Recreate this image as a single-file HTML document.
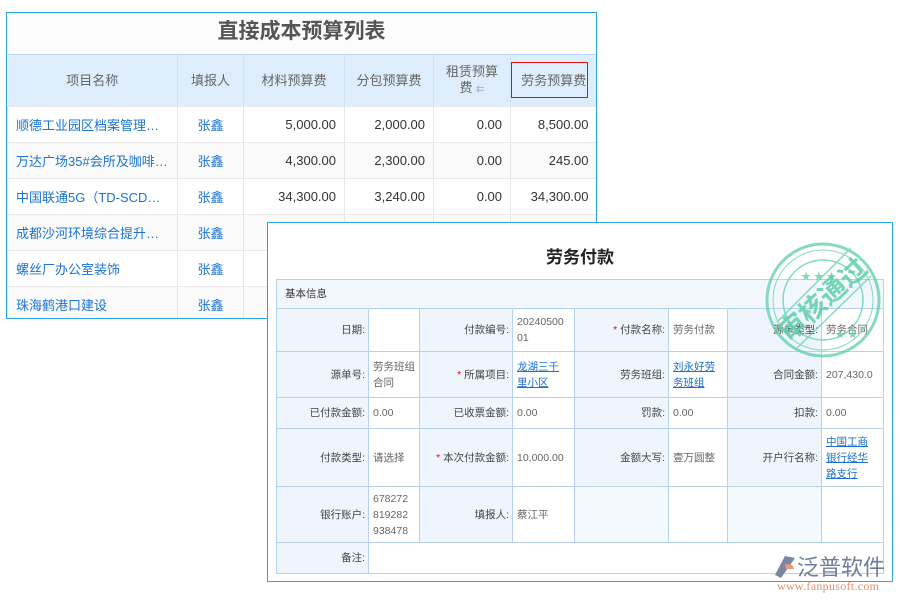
<!DOCTYPE html>
<html><head><meta charset="utf-8">
<style>
*{margin:0;padding:0;box-sizing:border-box}
body{width:900px;height:600px;background:#fff;position:relative;overflow:hidden;font-family:"Liberation Sans","Noto Sans CJK SC",sans-serif}
.a{position:absolute}
#t1{left:6px;top:12px;width:591px;height:307px;border:1px solid #2aa6e2;background:#fff;overflow:hidden}
#t1 .title{position:absolute;left:0;top:0;width:589px;height:42px;text-align:center;font-size:21px;font-weight:bold;color:#555;line-height:38px;background:#fcfcfc}
table{border-collapse:collapse;table-layout:fixed}
#t1 table{position:absolute;left:0;top:41px;width:589px}
#t1 th{background:#deedfb;font-weight:normal;color:#666;font-size:13px;height:52px;border-left:1px solid #cfe2f3;border-top:1px solid #b8d8f2;line-height:16px}
#t1 td{height:36px;font-size:13px;color:#333;border-left:1px solid #e6e6e6;border-top:1px solid #eaeaea;text-align:right;padding-right:8px}
#t1 tr:nth-child(odd) td{background:#fafafa}
#t1 td.n{text-align:left;padding-left:8px;color:#1b74d1;white-space:nowrap;overflow:hidden}
#t1 td.p{text-align:center;color:#1b74d1;padding:0}
#red{left:511px;top:62px;width:77px;height:36px;border:1px solid #e01010}
#p2{left:267px;top:222px;width:626px;height:360px;border:1px solid #2aa6e2;background:#fff}
#p2 .title{position:absolute;left:0;top:20px;width:624px;text-align:center;font-size:17px;font-weight:bold;color:#222}
#t2{position:absolute;left:8px;top:56px;width:607px;border:1px solid #a9cbe9}
#t2 td{border:1px solid #b6d3ee;font-size:10.5px;color:#666;line-height:16px;padding:0 3px}
#t2 td.l{background:#eef5fd;text-align:right;color:#444}
#t2 td.v{background:#fff;padding-left:4px}
#t2 a{color:#1b6fcf;text-decoration:underline}
.s{color:#e01010}
</style></head><body>
<div id="t1" class="a">
<div class="title">直接成本预算列表</div>
<table>
<colgroup><col style="width:170px"><col style="width:66px"><col style="width:101px"><col style="width:89px"><col style="width:77px"><col style="width:86px"></colgroup>
<tr><th style="border-left:none">项目名称</th><th>填报人</th><th>材料预算费</th><th>分包预算费</th><th>租赁预算<br>费 <span style="font-size:10px;color:#aac">⇇</span></th><th>劳务预算费</th></tr>
<tr><td class="n">顺德工业园区档案管理…</td><td class="p">张鑫</td><td>5,000.00</td><td>2,000.00</td><td>0.00</td><td>8,500.00</td></tr>
<tr><td class="n">万达广场35#会所及咖啡…</td><td class="p">张鑫</td><td>4,300.00</td><td>2,300.00</td><td>0.00</td><td>245.00</td></tr>
<tr><td class="n">中国联通5G（TD-SCD…</td><td class="p">张鑫</td><td>34,300.00</td><td>3,240.00</td><td>0.00</td><td>34,300.00</td></tr>
<tr><td class="n">成都沙河环境综合提升…</td><td class="p">张鑫</td><td></td><td></td><td></td><td></td></tr>
<tr><td class="n">螺丝厂办公室装饰</td><td class="p">张鑫</td><td></td><td></td><td></td><td></td></tr>
<tr><td class="n" style="height:32px">珠海鹤港口建设</td><td class="p">张鑫</td><td></td><td></td><td></td><td></td></tr>
</table>
</div>
<div id="red" class="a"></div>
<div id="p2" class="a">
<div class="title">劳务付款</div>
<table id="t2">
<colgroup><col style="width:92px"><col style="width:51px"><col style="width:93px"><col style="width:62px"><col style="width:94px"><col style="width:59px"><col style="width:94px"><col style="width:62px"></colgroup>
<tr><td colspan="8" style="height:29px;background:#f2f7fd;color:#333;padding-left:8px">基本信息</td></tr>
<tr style="height:43px"><td class="l">日期:</td><td class="v"></td><td class="l">付款编号:</td><td class="v">20240500<br>01</td><td class="l"><span class="s">*</span> 付款名称:</td><td class="v">劳务付款</td><td class="l">源单类型:</td><td class="v">劳务合同</td></tr>
<tr style="height:46px"><td class="l">源单号:</td><td class="v" style="white-space:nowrap">劳务班组<br>合同</td><td class="l"><span class="s">*</span> 所属项目:</td><td class="v"><a>龙湖三千<br>里小区</a></td><td class="l">劳务班组:</td><td class="v"><a>刘永好劳<br>务班组</a></td><td class="l">合同金额:</td><td class="v">207,430.0</td></tr>
<tr style="height:31px"><td class="l">已付款金额:</td><td class="v">0.00</td><td class="l">已收票金额:</td><td class="v">0.00</td><td class="l">罚款:</td><td class="v">0.00</td><td class="l">扣款:</td><td class="v">0.00</td></tr>
<tr style="height:58px"><td class="l">付款类型:</td><td class="v">请选择</td><td class="l"><span class="s">*</span> 本次付款金额:</td><td class="v">10,000.00</td><td class="l">金额大写:</td><td class="v">壹万圆整</td><td class="l">开户行名称:</td><td class="v"><a>中国工商<br>银行经华<br>路支行</a></td></tr>
<tr style="height:56px"><td class="l">银行账户:</td><td class="v">678272<br>819282<br>938478</td><td class="l">填报人:</td><td class="v">蔡江平</td><td class="l" style="background:#f4f9fe"></td><td class="v"></td><td class="l" style="background:#f4f9fe"></td><td class="v"></td></tr>
<tr style="height:31px"><td class="l">备注:</td><td class="v" colspan="7"></td></tr>
</table>
</div>
<svg class="a" style="left:763px;top:240px" width="120" height="120" viewBox="0 0 120 120">
<g fill="none" stroke="#5fcfa8" opacity="0.75">
<circle cx="60" cy="60" r="56" stroke-width="3"/>
<circle cx="60" cy="60" r="50" stroke-width="1"/>
<circle cx="60" cy="60" r="40" stroke-width="1.5"/>
<line x1="14" y1="82" x2="88" y2="8" stroke-width="1.5"/>
<line x1="32" y1="110" x2="108" y2="36" stroke-width="1.5"/>
</g>
<text x="60" y="69" fill="#5fcfa8" opacity="0.85" font-size="27" font-weight="bold" text-anchor="middle" transform="rotate(-42 60 60)" font-family="Noto Sans CJK SC,sans-serif">审核通过</text>
<text x="38" y="40" fill="#5fcfa8" font-size="10" opacity="0.8">★ ★ ★</text>
<text x="72" y="98" fill="#5fcfa8" font-size="10" opacity="0.8">★ ★</text>
</svg>
<svg class="a" style="left:773px;top:555px" width="24" height="24" viewBox="0 0 24 24">
<path d="M12 1 L22 3 L8 23 L2 20 Z" fill="#7a86a3"/>
<path d="M12 9 Q20 8 21 14 L13 14 Z" fill="#e6997a"/>
</svg>
<div class="a" style="left:797px;top:553px;font-size:22px;color:#6f7c9b;font-family:'Noto Sans CJK SC',sans-serif;line-height:27px">泛普软件</div>
<div class="a" style="left:777px;top:580px;font-size:12px;color:#e3906f;font-family:'Liberation Serif',serif;line-height:13px;letter-spacing:0.3px">www.fanpusoft.com</div>
</body></html>
